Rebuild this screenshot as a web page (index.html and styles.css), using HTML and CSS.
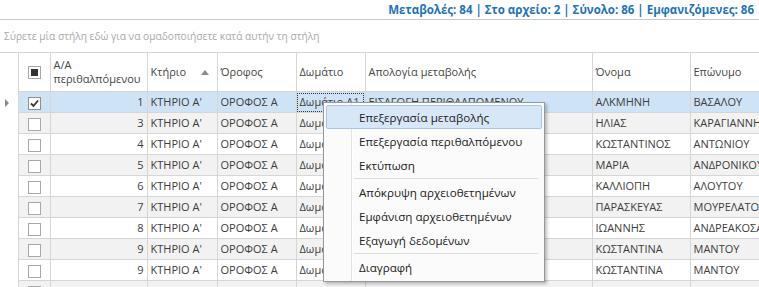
FILE: index.html
```html
<!DOCTYPE html>
<html lang="el">
<head>
<meta charset="utf-8">
<link rel="stylesheet" href="styles.css">
</head>
<body>
<div class="status">Μεταβολές: 84 | Στο αρχείο: 2 | Σύνολο: 86 | Εμφανιζόμενες: 86</div>
<div class="group-panel">Σύρετε μία στήλη εδώ για να ομαδοποιήσετε κατά αυτήν τη στήλη</div>
<div class="grid-wrap">
<table class="grid">
  <colgroup>
    <col class="c-ind"><col class="c-chk"><col class="c-aa"><col class="c-kt"><col class="c-or"><col class="c-dw"><col class="c-ap"><col class="c-on"><col class="c-ep">
  </colgroup>
  <thead>
    <tr>
      <th class="ind"></th>
      <th class="chk"><span class="box partial"></span></th>
      <th class="two"><div class="l1">Α/Α</div><div>περιθαλπόμενου</div></th>
      <th><div class="sorthead"><span>Κτήριο</span><span class="arrow"></span></div></th>
      <th>Όροφος</th>
      <th>Δωμάτιο</th>
      <th>Απολογία μεταβολής</th>
      <th>Όνομα</th>
      <th>Επώνυμο</th>
    </tr>
  </thead>
  <tbody>
    <tr class="sel">
      <td class="ind"><span class="tri"></span></td>
      <td class="chk"><span class="box checked"><svg viewBox="0 0 13 13" width="13" height="13"><path d="M3 6.5 L5.5 9 L10 3.5" fill="none" stroke="#333" stroke-width="1.8"/></svg></span></td>
      <td class="num">1</td><td>ΚΤΗΡΙΟ Α'</td><td>ΟΡΟΦΟΣ Α</td><td class="focus">Δωμάτιο Α1</td><td>ΕΙΣΑΓΩΓΗ ΠΕΡΙΘΑΛΠΟΜΕΝΟΥ</td><td>ΑΛΚΜΗΝΗ</td><td>ΒΑΣΑΛΟΥ</td>
    </tr>
    <tr class="alt">
      <td class="ind"></td><td class="chk"><span class="box"></span></td>
      <td class="num">3</td><td>ΚΤΗΡΙΟ Α'</td><td>ΟΡΟΦΟΣ Α</td><td>Δωμάτιο Α1</td><td></td><td>ΗΛΙΑΣ</td><td>ΚΑΡΑΓΙΑΝΝΗ</td>
    </tr>
    <tr>
      <td class="ind"></td><td class="chk"><span class="box"></span></td>
      <td class="num">4</td><td>ΚΤΗΡΙΟ Α'</td><td>ΟΡΟΦΟΣ Α</td><td>Δωμάτιο Α1</td><td></td><td>ΚΩΣΤΑΝΤΙΝΟΣ</td><td>ΑΝΤΩΝΙΟΥ</td>
    </tr>
    <tr class="alt">
      <td class="ind"></td><td class="chk"><span class="box"></span></td>
      <td class="num">5</td><td>ΚΤΗΡΙΟ Α'</td><td>ΟΡΟΦΟΣ Α</td><td>Δωμάτιο Α1</td><td></td><td>ΜΑΡΙΑ</td><td>ΑΝΔΡΟΝΙΚΟΥ</td>
    </tr>
    <tr>
      <td class="ind"></td><td class="chk"><span class="box"></span></td>
      <td class="num">6</td><td>ΚΤΗΡΙΟ Α'</td><td>ΟΡΟΦΟΣ Α</td><td>Δωμάτιο Α2</td><td></td><td>ΚΑΛΛΙΟΠΗ</td><td>ΑΛΟΥΤΟΥ</td>
    </tr>
    <tr class="alt">
      <td class="ind"></td><td class="chk"><span class="box"></span></td>
      <td class="num">7</td><td>ΚΤΗΡΙΟ Α'</td><td>ΟΡΟΦΟΣ Α</td><td>Δωμάτιο Α2</td><td></td><td>ΠΑΡΑΣΚΕΥΑΣ</td><td>ΜΟΥΡΕΛΑΤΟΣ</td>
    </tr>
    <tr>
      <td class="ind"></td><td class="chk"><span class="box"></span></td>
      <td class="num">8</td><td>ΚΤΗΡΙΟ Α'</td><td>ΟΡΟΦΟΣ Α</td><td>Δωμάτιο Α2</td><td></td><td>ΙΩΑΝΝΗΣ</td><td>ΑΝΔΡΕΑΚΟΣΑΣ</td>
    </tr>
    <tr class="alt">
      <td class="ind"></td><td class="chk"><span class="box"></span></td>
      <td class="num">9</td><td>ΚΤΗΡΙΟ Α'</td><td>ΟΡΟΦΟΣ Α</td><td>Δωμάτιο Α3</td><td></td><td>ΚΩΣΤΑΝΤΙΝΑ</td><td>ΜΑΝΤΟΥ</td>
    </tr>
    <tr>
      <td class="ind"></td><td class="chk"><span class="box"></span></td>
      <td class="num">9</td><td>ΚΤΗΡΙΟ Α'</td><td>ΟΡΟΦΟΣ Α</td><td>Δωμάτιο Α3</td><td></td><td>ΚΩΣΤΑΝΤΙΝΑ</td><td>ΜΑΝΤΟΥ</td>
    </tr>
    <tr class="alt">
      <td class="ind"></td><td class="chk"><span class="box"></span></td>
      <td class="num"></td><td></td><td></td><td></td><td></td><td></td><td></td>
    </tr>
  </tbody>
</table>
<div class="menu">
  <div class="item hot">Επεξεργασία μεταβολής</div>
  <div class="item">Επεξεργασία περιθαλπόμενου</div>
  <div class="item">Εκτύπωση</div>
  <div class="sep"></div>
  <div class="item">Απόκρυψη αρχειοθετημένων</div>
  <div class="item">Εμφάνιση αρχειοθετημένων</div>
  <div class="item">Εξαγωγή δεδομένων</div>
  <div class="sep"></div>
  <div class="item">Διαγραφή</div>
</div>
</div>
</body>
</html>
```

FILE: styles.css
```css
html, body {
  margin: 0;
  padding: 0;
  background: #fff;
  overflow: hidden;
  width: 759px;
  height: 287px;
}
body {
  font-family: "Open Sans", "Liberation Sans", sans-serif;
  font-size: 11px;
  color: #3b3b3b;
}
.status {
  height: 19px;
  line-height: 19px;
  border-bottom: 1px solid #c9c9c9;
  text-align: right;
  padding-right: 5px;
  font-weight: bold;
  font-size: 11.5px;
  color: #1f73b7;
}
.group-panel {
  height: 32px;
  line-height: 32px;
  padding-left: 4px;
  color: #a9a9a9;
  font-size: 10.2px;
}
.grid-wrap {
  position: relative;
  width: 759px;
  height: 236px;
  overflow: hidden;
}
.grid {
  border-collapse: collapse;
  table-layout: fixed;
  width: 800px;
}
.c-ind { width: 18px; }
.c-chk { width: 32px; }
.c-aa { width: 97px; }
.c-kt { width: 70px; }
.c-or { width: 79px; }
.c-dw { width: 69px; }
.c-ap { width: 227px; }
.c-on { width: 98px; }
.c-ep { width: 110px; }
.grid th, .grid td {
  border: 1px solid #d6d6d6;
  padding: 0 3px;
  white-space: nowrap;
  overflow: hidden;
  text-align: left;
  font-weight: normal;
}
.grid th {
  height: 38px;
  color: #444;
  line-height: 14px;
  vertical-align: middle;
}
.grid th.two { line-height: 14px; }
.grid th.ind, .grid td.ind {
  border-left: none;
  border-top: none;
  border-bottom: none;
  padding: 0;
  background: #fff;
}
.grid thead th.ind { border-top: 1px solid #d6d6d6; }
.grid td {
  height: 20px;
  line-height: 20px;
  color: #3d3d3d;
}
.grid tbody tr.alt td { background: #f2f2f2; }
.grid tbody tr.sel td { background: #cfe3f6; }
.grid tbody tr td.ind { background: #fff; }
.grid td.num { text-align: right; }
.grid td.chk, .grid th.chk { text-align: center; padding: 0; }
.grid td.focus { outline: 1px dotted #333; outline-offset: -2px; }
.sorthead {
  display: flex;
  align-items: center;
  justify-content: space-between;
  padding-right: 5px;
}
.arrow {
  width: 0;
  height: 0;
  border-left: 4px solid transparent;
  border-right: 4px solid transparent;
  border-bottom: 5px solid #8a8a8a;
}
.box {
  display: inline-block;
  vertical-align: middle;
  width: 11px;
  height: 11px;
  border: 1px solid #a8a8a8;
  background: #fff;
  position: relative;
}
.box svg { position: absolute; left: -1px; top: -1px; }
.box.partial::after {
  content: "";
  position: absolute;
  left: 2px;
  top: 2px;
  width: 7px;
  height: 7px;
  background: #333;
}
.box.checked { border-color: #8e8e8e; }
.tri {
  display: inline-block;
  vertical-align: middle;
  margin-left: 5px;
  width: 0;
  height: 0;
  border-top: 4px solid transparent;
  border-bottom: 4px solid transparent;
  border-left: 4px solid #8a8a8a;
}
.menu {
  position: absolute;
  left: 323px;
  top: 50px;
  width: 220px;
  padding: 2px 0;
  background: #fbfbfb;
  border: 1px solid #979797;
  box-shadow: 2px 2px 3px rgba(0,0,0,0.25);
  background-image: linear-gradient(to right, transparent 27px, #e3e3e3 27px, #e3e3e3 28px, #fff 28px, #fff 29px, transparent 29px);
  font-size: 11.6px;
  color: #222;
}
.item {
  height: 24px;
  line-height: 23px;
  padding-left: 32px;
  margin: 0 2px;
  border: 1px solid transparent;
  box-sizing: border-box;
  border-radius: 2px;
}
.item.hot {
  background: #d8e7f8;
  border-color: #a7c5e8;
}
.sep {
  height: 3px;
  margin-left: 30px;
  margin-right: 6px;
  border-top: 1px solid #dcdcdc;
  box-sizing: border-box;
  position: relative;
  top: 1px;
}
```
